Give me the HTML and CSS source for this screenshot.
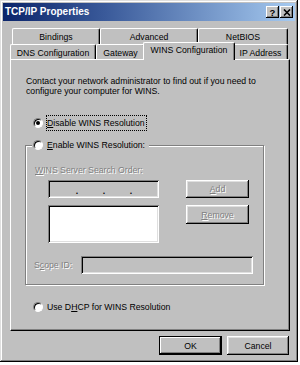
FILE: index.html
```html
<!DOCTYPE html>
<html>
<head>
<meta charset="utf-8">
<link rel="stylesheet" href="styles.css">
</head>
<body>
<div class="window">
  <div class="titlebar">
    <span class="title">TCP/IP Properties</span>
    <div class="tbtns">
      <span class="tbtn help">?</span>
      <span class="tbtn"><svg width="8" height="7" viewBox="0 0 8 7"><path d="M1 0.5L7 6.5M7 0.5L1 6.5" stroke="#000" stroke-width="1.6"/></svg></span>
    </div>
  </div>
  <div class="content">
    <div class="tabrow back">
      <div class="tab w-bind">Bindings</div>
      <div class="tab w-adv">Advanced</div>
      <div class="tab w-net">NetBIOS</div>
    </div>
    <div class="tabrow front">
      <div class="tab w-dns">DNS Configuration</div>
      <div class="tab w-gw">Gateway</div>
      <div class="tab w-wins selected">WINS Configuration</div>
      <div class="tab w-ip">IP Address</div>
    </div>
    <div class="panel">
      <p class="intro">Contact your network administrator to find out if you need to<br>configure your computer for WINS.</p>
      <div class="option first">
        <span class="radio checked"></span>
        <span class="label focus"><u>D</u>isable WINS Resolution</span>
      </div>
      <fieldset class="group">
        <legend class="legend">
          <span class="option">
            <span class="radio"></span>
            <span class="label"><u>E</u>nable WINS Resolution:</span>
          </span>
        </legend>
        <div class="caption disabled"><u>W</u>INS Server Search Order:</div>
        <div class="row row-ip">
          <div class="field ip"><span class="seg"></span><span class="dot">.</span><span class="seg"></span><span class="dot">.</span><span class="seg"></span><span class="dot">.</span><span class="seg"></span></div>
          <div class="btn side disabled"><span><u>A</u>dd</span></div>
        </div>
        <div class="row row-list">
          <div class="field list"></div>
          <div class="btn side remove disabled"><span><u>R</u>emove</span></div>
        </div>
        <div class="row row-scope">
          <span class="scope-label disabled">S<u>c</u>ope ID:</span>
          <div class="field scope"></div>
        </div>
      </fieldset>
      <div class="option last">
        <span class="radio"></span>
        <span class="label">Use D<u>H</u>CP for WINS Resolution</span>
      </div>
    </div>
    <div class="actions">
      <div class="btn default">OK</div>
      <div class="btn cancel">Cancel</div>
    </div>
  </div>
</div>
</body>
</html>
```
FILE: styles.css
```css
* { box-sizing: border-box; }
html, body { margin: 0; padding: 0; background: #fff; }
body {
  font-family: "Liberation Sans", Arial, sans-serif;
  font-size: 8.7px;
  line-height: 10px;
  color: #000;
}
u { text-decoration: underline; text-underline-offset: 1px; }

.window {
  width: 298px;
  height: 362px;
  background: #c0c0c0;
  padding: 3px;
  display: flex;
  flex-direction: column;
  box-shadow: inset -1px -1px #000, inset 1px 1px #dfdfdf, inset -2px -2px #808080, inset 2px 2px #fff;
}

.titlebar {
  height: 18px;
  flex: none;
  background: linear-gradient(90deg, #0a246a 0%, #3a5a9a 35%, #a6caf0 100%);
  display: flex;
  align-items: center;
  justify-content: space-between;
  padding: 0 2px 0 2px;
}
.title { color: #fff; font-weight: bold; font-size: 10px; letter-spacing: 0; }
.tbtns { display: flex; gap: 1px; }
.tbtn {
  width: 13px;
  height: 12px;
  background: #c0c0c0;
  box-shadow: inset -1px -1px #000, inset 1px 1px #fff, inset -2px -2px #808080;
  display: flex;
  align-items: center;
  justify-content: center;
  font-weight: bold;
  font-size: 9.5px;
  line-height: 10px;
}
.tbtn.help { padding-top: 1px; }

.content {
  flex: 1;
  display: flex;
  flex-direction: column;
  padding: 7px 5px 0 7px;
}

.tabrow { display: flex; flex: none; }
.tabrow.back { height: 16px; margin: 0 1px 0 2px; }
.tabrow.front { height: 15px; margin: 0 1px 0 0; }
.tab {
  display: flex;
  align-items: center;
  justify-content: center;
  background: #c0c0c0;
  border-top: 1px solid #fff;
  border-left: 1px solid #fff;
  border-right: 1px solid #000;
  border-radius: 2px 2px 0 0;
  box-shadow: inset -1px 0 #808080;
  padding-top: 1px;
}
.w-bind { width: 88px; }
.w-adv { width: 98px; }
.w-net { width: 90px; }
.w-dns { width: 86px; }
.w-gw { width: 49px; }
.w-wins { width: 88px; }
.w-ip { width: 55px; }
.tab.selected {
  position: relative;
  z-index: 2;
  width: 92px;
  margin: -2px -2px -1px -2px;
  height: 18px;
  padding-top: 0;
  padding-bottom: 3px;
}

.panel {
  height: 272px;
  flex: none;
  display: flex;
  flex-direction: column;
  align-items: flex-start;
  border-top: 1px solid #fff;
  border-left: 1px solid #fff;
  border-right: 1px solid #000;
  border-bottom: 1px solid #000;
  box-shadow: inset -1px -1px #808080;
}

.intro { margin: 16px 0 0 15px; white-space: nowrap; }

.option { display: flex; align-items: center; gap: 3px; }
.option.first { margin: 19px 0 0 22px; height: 16px; }
.option.last { margin: 16px 0 0 22px; height: 12px; }
.radio {
  width: 10px;
  height: 10px;
  flex: none;
  border-radius: 50%;
  background: #fff;
  border: 1px solid;
  border-color: #808080 #fff #fff #808080;
  box-shadow: inset 1px 1px #000;
  display: flex;
  align-items: center;
  justify-content: center;
}
.radio.checked::after {
  content: "";
  width: 4px;
  height: 4px;
  border-radius: 50%;
  background: #000;
}
.label { border: 1px solid transparent; padding: 0 1px 0 0; white-space: nowrap; }
.label.focus { border: 1px dotted #000; padding: 2px 1px 2px 0; }

.group {
  margin: 8px 0 0 14px;
  width: 239px;
  height: 146px;
  min-width: 0;
  padding: 0;
  border: 1px solid #808080;
  box-shadow: inset 1px 1px #fff, 1px 1px #fff;
  display: block;
}
.legend {
  margin-left: 6px;
  padding: 0 2px 0 1px;
  background: #c0c0c0;
}

.disabled { color: #808080; text-shadow: 1px 1px 0 #fff; }

.caption { margin: 14px 0 0 9px; white-space: nowrap; }
.row { display: flex; align-items: flex-start; }
.row-ip { margin: 5px 0 0 22px; gap: 27px; }
.row-list { margin: 7px 0 0 22px; gap: 27px; }
.row-scope { margin: 13px 0 0 8px; align-items: center; }

.field {
  box-shadow: inset 1px 1px #808080, inset -1px -1px #fff, inset 2px 2px #000, inset -2px -2px #dfdfdf;
}
.ip {
  width: 111px;
  height: 18px;
  display: flex;
  align-items: center;
  padding: 2px 3px 0 4px;
}
.seg { flex: 1; }
.dot { width: 4px; text-align: center; font-weight: bold; line-height: 8px; padding-top: 2px; }
.list { width: 111px; height: 38px; background: #fff; }
.scope-label { width: 47px; white-space: nowrap; }
.scope { width: 172px; height: 18px; }

.btn {
  display: flex;
  align-items: center;
  justify-content: center;
  background: #c0c0c0;
  box-shadow: inset -1px -1px #000, inset 1px 1px #fff, inset -2px -2px #808080, inset 2px 2px #dfdfdf;
}
.btn.side { width: 63px; height: 18px; }
.btn.remove { height: 19px; }

.actions {
  display: flex;
  justify-content: flex-end;
  gap: 5px;
  margin: 5px 1px 0 0;
}
.actions .btn { height: 19px; }
.btn.default {
  width: 63px;
  border: 1px solid #000;
  box-shadow: inset -1px -1px #000, inset 1px 1px #fff, inset -2px -2px #808080;
}
.btn.cancel { width: 62px; }
```
